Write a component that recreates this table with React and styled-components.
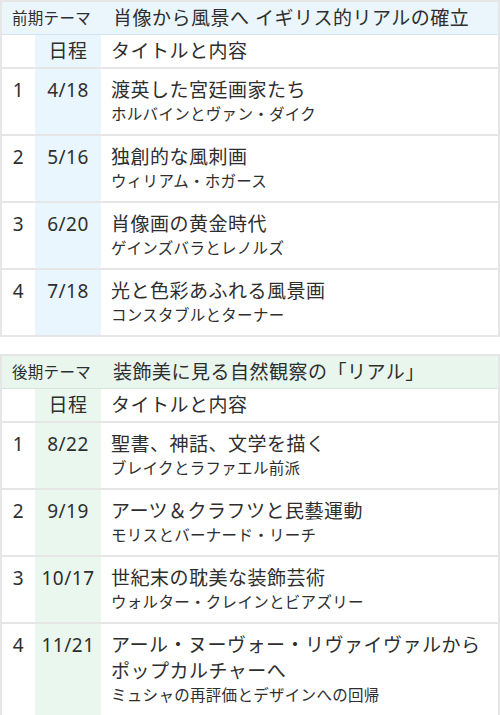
import styled, { createGlobalStyle } from "styled-components";

const GlobalStyle = createGlobalStyle`
    html, body {
        margin: 0;
        padding: 0;
        background: #fff;
    }
    body {
        font-family: "Noto Sans", "Noto Sans CJK JP", sans-serif;
        color: #2e2e2e;
    }
`;

const themes = {
    early: { head: "#eaf5fc", line: "#d6e4ec", date: "#eaf6fd" },
    late: { head: "#e9f6ee", line: "#d3e5d9", date: "#e9f7ee" },
};

const schedule = [
    {
        key: "early",
        label: "前期テーマ",
        theme: "肖像から風景へ イギリス的リアルの確立",
        items: [
            { no: 1, date: "4/18", title: "渡英した宮廷画家たち", sub: "ホルバインとヴァン・ダイク" },
            { no: 2, date: "5/16", title: "独創的な風刺画", sub: "ウィリアム・ホガース" },
            { no: 3, date: "6/20", title: "肖像画の黄金時代", sub: "ゲインズバラとレノルズ" },
            { no: 4, date: "7/18", title: "光と色彩あふれる風景画", sub: "コンスタブルとターナー" },
        ],
    },
    {
        key: "late",
        label: "後期テーマ",
        theme: "装飾美に見る自然観察の「リアル」",
        items: [
            { no: 1, date: "8/22", title: "聖書、神話、文学を描く", sub: "ブレイクとラファエル前派" },
            { no: 2, date: "9/19", title: "アーツ＆クラフツと民藝運動", sub: "モリスとバーナード・リーチ" },
            { no: 3, date: "10/17", title: "世紀末の耽美な装飾芸術", sub: "ウォルター・クレインとビアズリー" },
            { no: 4, date: "11/21", title: "アール・ヌーヴォー・リヴァイヴァルからポップカルチャーへ", sub: "ミュシャの再評価とデザインへの回帰" },
        ],
    },
];

const App = () => {
    return (
        <Page>
            <GlobalStyle />
            {schedule.map(block => {
                const t = themes[block.key];
                return (
                    <Table key={block.key}>
                        <colgroup>
                            <col style={{ width: 34 }} />
                            <col style={{ width: 66 }} />
                            <col />
                        </colgroup>
                        <tbody>
                            <HeadRow $bg={t.head} $line={t.line}>
                                <Label colSpan={2}>{block.label}</Label>
                                <ThemeCell>{block.theme}</ThemeCell>
                            </HeadRow>
                            <Row>
                                <NoCell />
                                <DateCell $bg={t.date}>日程</DateCell>
                                <MainCell>タイトルと内容</MainCell>
                            </Row>
                            {block.items.map(item => (
                                <Row key={item.no} $item>
                                    <NoCell $item>{item.no}</NoCell>
                                    <DateCell $item $bg={t.date}>{item.date}</DateCell>
                                    <MainCell $item>
                                        <Title>{item.title}</Title>
                                        <Sub>{item.sub}</Sub>
                                    </MainCell>
                                </Row>
                            ))}
                        </tbody>
                    </Table>
                );
            })}
        </Page>
    );
};

const Page = styled.div`
    display: flex;
    flex-direction: column;
    gap: 17px;
    width: 500px;
`;

const Table = styled.table`
    width: 100%;
    border-collapse: collapse;
    table-layout: fixed;
    border: 2px solid #e6e6e6;
`;

const HeadRow = styled.tr`
    background: ${p => p.$bg};
    border-bottom: 1px solid ${p => p.$line};
`;

const Row = styled.tr`
    border-top: ${p => (p.$item ? "2px solid #e6e6e6" : "none")};
`;

const Cell = styled.td`
    padding: ${p => (p.$item ? "8px 0 9px" : "3px 0")};
    vertical-align: top;
    font-size: 19px;
    line-height: 26px;
    letter-spacing: 0.5px;
`;

const Label = styled(Cell)`
    text-align: center;
    font-size: 15.5px;
    letter-spacing: 0.3px;
`;

const ThemeCell = styled(Cell)`
    padding-left: 12px;
    padding-right: 4px;
    white-space: nowrap;
`;

const NoCell = styled(Cell)`
    text-align: center;
`;

const DateCell = styled(Cell)`
    text-align: center;
    background: ${p => p.$bg};
`;

const MainCell = styled(Cell)`
    padding-left: 10px;
    padding-right: 10px;
`;

const Title = styled.div``;

const Sub = styled.div`
    font-size: 15.5px;
    line-height: 22px;
    letter-spacing: 0.3px;
`;

export default App;
